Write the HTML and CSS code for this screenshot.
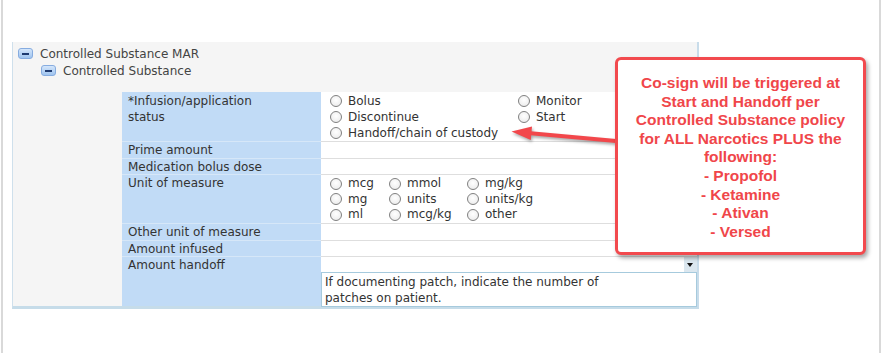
FILE: index.html
```html
<!DOCTYPE html>
<html lang="en">
<head>
    <meta charset="UTF-8">
    <title>Controlled Substance MAR</title>
    <link rel="stylesheet" href="styles.css">
</head>
<body>
    <div class="frame">
        <div class="panel">
            <div class="tree-row"><span class="toggle"></span>Controlled Substance MAR</div>
            <div class="tree-row sub"><span class="toggle"></span>Controlled Substance</div>

            <div class="form">
                <div class="label first">*Infusion/application<br>status</div>
                <div class="value first">
                    <div class="status-options">
                        <span class="opt"><i class="radio"></i>Bolus</span>
                        <span class="opt"><i class="radio"></i>Monitor</span>
                        <span class="opt"><i class="radio"></i>Discontinue</span>
                        <span class="opt"><i class="radio"></i>Start</span>
                        <span class="opt"><i class="radio"></i>Handoff/chain of custody</span>
                    </div>
                </div>

                <div class="label">Prime amount</div>
                <div class="value"></div>

                <div class="label">Medication bolus dose</div>
                <div class="value"></div>

                <div class="label">Unit of measure</div>
                <div class="value">
                    <div class="unit-options">
                        <span class="opt"><i class="radio"></i>mcg</span>
                        <span class="opt"><i class="radio"></i>mmol</span>
                        <span class="opt"><i class="radio"></i>mg/kg</span>
                        <span class="opt"><i class="radio"></i>mg</span>
                        <span class="opt"><i class="radio"></i>units</span>
                        <span class="opt"><i class="radio"></i>units/kg</span>
                        <span class="opt"><i class="radio"></i>ml</span>
                        <span class="opt"><i class="radio"></i>mcg/kg</span>
                        <span class="opt"><i class="radio"></i>other</span>
                    </div>
                </div>

                <div class="label">Other unit of measure</div>
                <div class="value"></div>

                <div class="label">Amount infused</div>
                <div class="value"></div>

                <div class="label">Amount handoff</div>
                <div class="value handoff">
                    <div class="select"><span class="drop"></span></div>
                    <div class="note">If documenting patch, indicate the number of<br>patches on patient.</div>
                </div>
            </div>
        </div>
    </div>

    <svg class="arrow" width="886" height="353" viewBox="0 0 886 353">
        <line x1="616" y1="141" x2="528" y2="133" stroke="#f2474b" stroke-width="4"/>
        <polygon points="511.5,131.5 532,126.5 530.8,140" fill="#f2474b"/>
    </svg>

    <div class="callout">
        Co-sign will be triggered at<br>
        Start and Handoff per<br>
        Controlled Substance policy<br>
        for ALL Narcotics PLUS the<br>
        following:<br>
        - Propofol<br>
        - Ketamine<br>
        - Ativan<br>
        - Versed
    </div>
</body>
</html>
```

FILE: styles.css
```css
body{
    margin: 0;
    background-color: white;
    font-family: "DejaVu Sans", Verdana, sans-serif;
    font-size: 12px;
    color: #333;
}
.frame{
    margin-left: 1px;
    width: 876px;
    height: 311px;
    border-left: 2px solid #d9d9d9;
    border-right: 2px solid #d9d9d9;
    padding-top: 42px;
}
.panel{
    margin-left: 9px;
    width: 684px;
    background-color: #f5f5f5;
    border-left: 1px solid #cfe0ec;
    border-right: 2px solid #c8dcea;
    border-bottom: 3px solid #c6dce9;
    padding-top: 3px;
}
.tree-row{
    display: flex;
    align-items: center;
    height: 17px;
    padding-left: 5px;
    color: #444;
}
.tree-row.sub{
    padding-left: 28px;
}
.toggle{
    position: relative;
    width: 15px;
    height: 11px;
    box-sizing: border-box;
    margin-right: 7px;
    border: 1px solid #86ace0;
    border-radius: 3px;
    background: linear-gradient(#d4e6fb, #9fc4ef);
}
.toggle::after{
    content: "";
    position: absolute;
    left: 3px;
    top: 3.5px;
    width: 7px;
    height: 2px;
    background-color: #1e3a70;
}
.form{
    display: grid;
    grid-template-columns: 199px 376px;
    grid-template-rows: 49px 17px 16px 49px 17px 16px 50px;
    margin-left: 109px;
    margin-top: 13px;
    line-height: 16px;
}
.label{
    background-color: #c1dbf6;
    border-top: 1px solid #d6e7f8;
    padding: 0 6px;
    box-sizing: border-box;
}
.value{
    background-color: white;
    border-top: 1px solid #dedede;
    box-sizing: border-box;
}
.label.first, .value.first{
    border-top: none;
    padding-top: 1px;
}
.opt{
    display: flex;
    align-items: center;
    white-space: nowrap;
}
.radio{
    width: 12px;
    height: 12px;
    box-sizing: border-box;
    border: 1px solid #808080;
    border-radius: 50%;
    background: radial-gradient(circle at 50% 40%, #ffffff, #e8e8e8);
    margin-right: 6px;
}
.status-options{
    display: grid;
    grid-template-columns: 188px auto;
    padding-left: 9px;
}
.unit-options{
    display: grid;
    grid-template-columns: 59px 78px auto;
    padding-left: 9px;
    padding-top: 1px;
    line-height: 15.5px;
}
.handoff{
    display: flex;
    flex-direction: column;
}
.select{
    display: flex;
    justify-content: flex-end;
    height: 15px;
}
.drop{
    position: relative;
    width: 13px;
    height: 15px;
    background-color: #dbe7ef;
}
.drop::after{
    content: "";
    position: absolute;
    left: 3px;
    top: 6px;
    border-left: 3.5px solid transparent;
    border-right: 3.5px solid transparent;
    border-top: 4px solid #111;
}
.note{
    flex: 1;
    border: 1px solid #a6cadd;
    padding: 1px 3px 0;
    color: #333;
}
.arrow{
    position: absolute;
    left: 0;
    top: 0;
    pointer-events: none;
    filter: drop-shadow(1px 2px 1.5px rgba(0, 0, 0, 0.35));
}
.callout{
    position: absolute;
    left: 615px;
    top: 57px;
    width: 251px;
    height: 198px;
    box-sizing: border-box;
    border: 3px solid #f24a4e;
    border-radius: 6px;
    background-color: white;
    box-shadow: 2px 3px 4px rgba(0, 0, 0, 0.35);
    padding-top: 14px;
    text-align: center;
    font-family: "Liberation Sans", Arial, sans-serif;
    font-weight: bold;
    font-size: 15.5px;
    line-height: 18.6px;
    color: #f0464a;
}
```
